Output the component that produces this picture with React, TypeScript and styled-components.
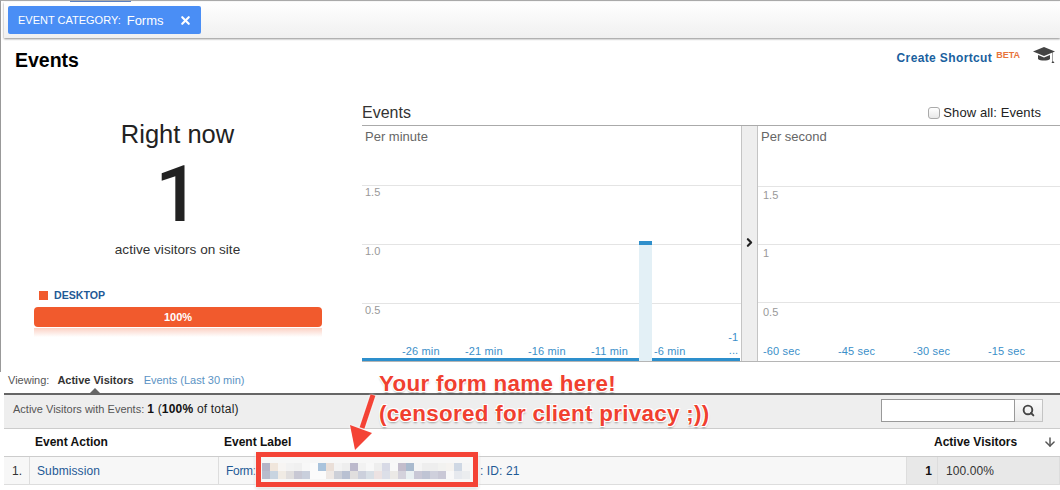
import styled, { createGlobalStyle } from "styled-components";
import { X, Search, ArrowDown, ChevronRight } from "lucide-react";

const GlobalStyle = createGlobalStyle`
  html, body {
    margin: 0;
    padding: 0;
    background: #fff;
    overflow: hidden;
  }
  * {
    box-sizing: border-box;
  }
`;

const Page = styled.div`
  position: relative;
  width: 1060px;
  height: 490px;
  overflow: hidden;
  font-family: "Liberation Sans", Arial, sans-serif;
  color: #222;
`;

const TopSection = styled.div`
  position: relative;
  height: 372px;
  border-left: 1px solid #999;
  border-top: 1px solid #aaa;
`;

const ActiveTabMark = styled.div`
  position: absolute;
  left: 69px;
  top: 0;
  width: 61px;
  height: 1px;
  background: #5b7fc0;
`;

const FilterBar = styled.div`
  margin: 1px 0 0 3px;
  height: 36px;
  padding: 4px 0 0 4px;
  background: linear-gradient(#fff, #f0f0f0);
  box-shadow: 0 1px 2px rgba(0, 0, 0, 0.45);
`;

const Chip = styled.div`
  width: 193px;
  height: 28px;
  padding-left: 10px;
  display: flex;
  align-items: center;
  color: #fff;
  background: #4a8ef5;
  border-radius: 2px;
`;

const ChipKey = styled.span`
  font-size: 11px;
  margin-right: 6px;
`;

const ChipValue = styled.span`
  font-size: 13px;
  width: 52px;
`;

const TitleRow = styled.div`
  height: 60px;
  display: flex;
  justify-content: space-between;
  padding: 0 5px 0 14px;
`;

const Title = styled.h1`
  margin: 11px 0 0;
  font-size: 19.5px;
  line-height: 23px;
  font-weight: bold;
  color: #000;
`;

const ShortcutBox = styled.div`
  display: flex;
  align-items: flex-start;
  padding-top: 9px;
`;

const ShortcutLink = styled.a`
  font-size: 12px;
  line-height: 15px;
  margin-top: 4px;
  font-weight: bold;
  letter-spacing: 0.37px;
  color: #1a5f9e;
`;

const Beta = styled.sup`
  font-size: 9px;
  line-height: 10px;
  margin: 3px 13px 0 4px;
  font-weight: bold;
  color: #e8743b;
`;

const Overview = styled.div`
  display: flex;
`;

const NowPanel = styled.div`
  flex: none;
  width: 361px;
  padding-top: 21px;
`;

const NowHeading = styled.div`
  width: 353px;
  text-align: center;
  font-size: 25.5px;
  line-height: 30px;
  color: #222;
`;

const NowCount = styled.div`
  width: 353px;
  margin-top: 4px;
  text-align: center;
  font-family: Roboto, "Liberation Sans", sans-serif;
  font-size: 78px;
  font-weight: 500;
  line-height: 84px;
  color: #222;
`;

const NowCaption = styled.div`
  width: 353px;
  margin-top: 5px;
  text-align: center;
  font-size: 13.6px;
  line-height: 16px;
  color: #333;
`;

const DeviceLabel = styled.div`
  margin: 31px 0 0 38px;
  display: flex;
  align-items: center;
  gap: 6px;
  font-size: 10.6px;
  line-height: 13px;
  font-weight: bold;
  color: #1f5a96;
`;

const DeviceSwatch = styled.span`
  width: 9px;
  height: 9px;
  background: #f15a2d;
`;

const DeviceBar = styled.div`
  margin: 5px 0 0 33px;
  width: 288px;
  height: 20px;
  border-radius: 4px;
  background: #f15a2d;
  color: #fff;
  font-size: 11px;
  line-height: 20px;
  font-weight: bold;
  text-align: center;
`;

const DeviceReflection = styled.div`
  margin: 1px 0 0 33px;
  width: 288px;
  height: 9px;
  background: linear-gradient(rgba(241, 90, 45, 0.28), rgba(241, 90, 45, 0));
`;

const ChartPanel = styled.div`
  flex: 1;
  min-width: 0;
  margin-top: 2px;
`;

const ChartHead = styled.div`
  height: 26px;
  display: flex;
  justify-content: space-between;
  align-items: center;
  padding-right: 19px;
  border-bottom: 1px solid #aaa;
`;

const ChartTitle = styled.div`
  font-size: 16px;
  color: #333;
`;

const ShowAll = styled.label`
  display: flex;
  align-items: center;
  gap: 3px;
  font-size: 13px;
  letter-spacing: 0.1px;
  color: #222;
`;

const CheckBox = styled.span`
  width: 12px;
  height: 12px;
  border: 1px solid #aaa;
  border-radius: 3px;
  background: linear-gradient(#fff, #e8e8e8);
`;

const Panes = styled.div`
  display: flex;
  height: 236px;
  border-bottom: 1px solid #b5b5b5;
`;

const Pane = styled.div<{ $width: number }>`
  position: relative;
  flex: none;
  width: ${(p) => p.$width}px;
`;

const PaneTitle = styled.div<{ $height: number }>`
  height: ${(p) => p.$height}px;
  padding: 3px 0 0 3px;
  font-size: 13px;
  line-height: 16px;
  color: #666;
`;

const Band = styled.div<{ $height: number; $top: number; $indent: number }>`
  height: ${(p) => p.$height}px;
  padding: ${(p) => p.$top}px 0 0 ${(p) => p.$indent}px;
  border-top: 1px solid #e4e4e4;
  font-size: 11px;
  line-height: 13px;
  color: #999;
`;

const Bar = styled.div`
  position: absolute;
  left: 277px;
  top: 115px;
  width: 13px;
  height: 120px;
  background: #e3f0f6;
  border-top: 4px solid #2f8fcb;
  z-index: 2;
`;

const Axis = styled.div<{ $line: boolean }>`
  position: absolute;
  left: 0;
  right: 1px;
  bottom: 0;
  height: 17px;
  border-bottom: 3px solid ${(p) => (p.$line ? "#2d8fcc" : "transparent")};
  display: flex;
  align-items: center;
`;

const Tick = styled.span<{ $gap: number }>`
  flex: none;
  width: ${(p) => p.$gap}px;
  font-size: 11px;
  line-height: 13px;
  letter-spacing: 0.15px;
  color: #3b8fc9;
  white-space: nowrap;
`;

const AxisSpacer = styled.span<{ $width: number }>`
  flex: none;
  width: ${(p) => p.$width}px;
`;

const Overflow = styled.div`
  position: absolute;
  right: 3px;
  bottom: 4px;
  text-align: right;
  font-size: 11px;
  line-height: 13px;
  color: #3b8fc9;
`;

const Divider = styled.div`
  flex: none;
  width: 17px;
  background: #eee;
  border-left: 1px solid #c4c4c4;
  border-right: 1px solid #c4c4c4;
  display: flex;
  justify-content: center;
  padding-top: 110px;
  color: #222;
`;

const Tabs = styled.div`
  display: flex;
  gap: 8px;
  margin: 2px 0 6px;
  padding-left: 8px;
  font-size: 11px;
  line-height: 13px;
`;

const TabLabel = styled.span`
  color: #555;
`;

const TabActive = styled.span`
  position: relative;
  font-weight: bold;
  color: #333;
  margin-right: 2px;
  &::after {
    content: "";
    position: absolute;
    left: 33px;
    top: 14px;
    border: 5px solid transparent;
    border-top: 0;
    border-bottom-color: #666;
  }
`;

const TabLink = styled.span`
  color: #5b93c4;
`;

const Table = styled.div`
  margin-left: 4px;
  border-top: 2px solid #666;
`;

const Summary = styled.div`
  height: 34px;
  padding: 4px 17px 0 9px;
  display: flex;
  justify-content: space-between;
  background: #eee;
  border-bottom: 1px solid #ccc;
`;

const SummaryText = styled.div`
  padding-top: 3px;
  font-size: 11px;
  line-height: 15px;
  color: #555;
`;

const SummaryValue = styled.span`
  margin-left: 3px;
  font-size: 12px;
  color: #222;
  letter-spacing: 0.2px;
  b {
    color: #111;
  }
`;

const SearchBox = styled.div`
  display: flex;
  height: 23px;
`;

const SearchInput = styled.div`
  width: 134px;
  background: #fff;
  border: 1px solid #999;
`;

const SearchButton = styled.div`
  width: 28px;
  display: flex;
  align-items: center;
  justify-content: center;
  color: #444;
  background: linear-gradient(#fafafa, #eaeaea);
  border: 1px solid #c4c4c4;
  border-left: 0;
`;

const HeadRow = styled.div`
  height: 27px;
  padding-bottom: 2px;
  display: flex;
  align-items: center;
  font-size: 12px;
  font-weight: bold;
  color: #111;
`;

const HeadCell = styled.div<{ $width: number; $indent: number }>`
  flex: none;
  width: ${(p) => p.$width}px;
  padding-left: ${(p) => p.$indent}px;
  white-space: nowrap;
`;

const SortIcon = styled.span`
  display: flex;
  margin-left: 26px;
  color: #555;
`;

const DataRow = styled.div`
  height: 29px;
  display: flex;
  font-size: 12px;
  letter-spacing: 0.1px;
  background: #f7f7f7;
  border-top: 1px solid #ccc;
  border-bottom: 1px solid #ddd;
`;

const RowCell = styled.div<{ $width: number; $pad: number; $shade?: boolean }>`
  flex: none;
  width: ${(p) => p.$width}px;
  padding-left: ${(p) => p.$pad}px;
  display: flex;
  align-items: center;
  background: ${(p) => (p.$shade ? "#e8e8e8" : "transparent")};
  border-right: 1px solid #ddd;
  color: #333;
`;

const RowLink = styled.span`
  color: #1f5a96;
`;

const FormLabel = styled(RowLink)`
  flex: none;
  width: 30px;
  letter-spacing: -0.3px;
`;

const MetricValue = styled.b`
  margin-left: auto;
  padding-right: 5px;
  color: #111;
`;

const PixelGrid = styled.div`
  margin: 0 10px 0 6px;
  display: grid;
  grid-template-columns: repeat(26, 8px);
  grid-auto-rows: 8px;
`;

const Pixel = styled.span<{ $c: string }>`
  background: ${(p) => p.$c};
`;

const RedBox = styled.div`
  position: absolute;
  left: 256px;
  top: 452px;
  width: 222px;
  height: 35px;
  border: 5px solid #f44336;
  box-shadow: 0 0 2px 1px rgba(255, 255, 255, 0.9), 0 1px 3px rgba(0, 0, 0, 0.3);
`;

const Callout = styled.div`
  position: absolute;
  left: 379px;
  top: 369px;
  font-size: 22.4px;
  line-height: 30px;
  font-weight: bold;
  color: #f0402f;
  white-space: nowrap;
  letter-spacing: 0.3px;
  text-shadow: 1px 1px 0 #fff, -1px -1px 0 #fff, 1px -1px 0 #fff, -1px 1px 0 #fff, 0 2px 2px rgba(0, 0, 0, 0.35);
`;

const CalloutArrow = styled.svg`
  position: absolute;
  left: 340px;
  top: 390px;
  filter: drop-shadow(0 0 1px #fff);
`;

const top = ["#b5b5c8", "#f0e6dc", "#f7f5f3", "#f2f2f2", "#f0f0f0", "#f8f8f8", "#fbfbfb", "#a9c3dc", "#eadfd8", "#f3f3f3", "#eeeeee", "#bcb9cc", "#f2f2f2", "#f8f8f8", "#eeeeee", "#d8dae6", "#f8f8f8", "#c3bdcc", "#a9bace", "#f5f5f5", "#eeeeee", "#eeeeee", "#f2f2f0", "#f5f3f0", "#cfd8e4", "#f5f5f5"];
const bottom = ["#b8bccd", "#c8d4e0", "#f0ebe4", "#e0dede", "#c8c8d4", "#c9cfdc", "#fbfbfb", "#fbfbfb", "#eee8e4", "#cdd0d8", "#b9c1d2", "#e0dede", "#ccd0dc", "#d8dfe6", "#ece2e2", "#dcdfe8", "#ebe9e6", "#d4d2dc", "#e9f0f2", "#c9c8d6", "#bfc4d4", "#cfd0dc", "#c9c8d6", "#f8f8f8", "#e6e9ee", "#ebedef"];

const minuteTicks = ["-26 min", "-21 min", "-16 min", "-11 min", "-6 min"];
const secondTicks = ["-60 sec", "-45 sec", "-30 sec", "-15 sec"];

const App = () => {
  return (
    <Page>
      <GlobalStyle />
      <TopSection>
        <ActiveTabMark />
        <FilterBar>
          <Chip>
            <ChipKey>EVENT CATEGORY:</ChipKey>
            <ChipValue>Forms</ChipValue>
            <X size={13} strokeWidth={4} />
          </Chip>
        </FilterBar>
        <TitleRow>
          <Title>Events</Title>
          <ShortcutBox>
            <ShortcutLink>Create Shortcut</ShortcutLink>
            <Beta>BETA</Beta>
            <svg width="22" height="17" viewBox="0 0 22 17">
              <path d="M11 0 L22 4.5 L11 9 L0 4.5 Z" fill="#444" />
              <path d="M5 8 L11 10.5 L17 8 V12 C15 14 7 14 5 12 Z" fill="#444" />
              <path d="M20 5 V14 L21.5 16 H18.5 L19.5 14 V5 Z" fill="#444" />
            </svg>
          </ShortcutBox>
        </TitleRow>
        <Overview>
          <NowPanel>
            <NowHeading>Right now</NowHeading>
            <NowCount>1</NowCount>
            <NowCaption>active visitors on site</NowCaption>
            <DeviceLabel>
              <DeviceSwatch />
              DESKTOP
            </DeviceLabel>
            <DeviceBar>100%</DeviceBar>
            <DeviceReflection />
          </NowPanel>
          <ChartPanel>
            <ChartHead>
              <ChartTitle>Events</ChartTitle>
              <ShowAll>
                <CheckBox />
                Show all: Events
              </ShowAll>
            </ChartHead>
            <Panes>
              <Pane $width={379}>
                <PaneTitle $height={59}>Per minute</PaneTitle>
                <Band $height={59} $top={0} $indent={3}>1.5</Band>
                <Band $height={59} $top={0} $indent={3}>1.0</Band>
                <Band $height={59} $top={0} $indent={3}>0.5</Band>
                <Bar />
                <Axis $line>
                  <AxisSpacer $width={40} />
                  {minuteTicks.map((tick) => (
                    <Tick $gap={63} key={tick}>
                      {tick}
                    </Tick>
                  ))}
                </Axis>
                <Overflow>
                  -1
                  <br />
                  ...
                </Overflow>
              </Pane>
              <Divider>
                <ChevronRight size={13} strokeWidth={4} />
              </Divider>
              <Pane $width={302}>
                <PaneTitle $height={60}>Per second</PaneTitle>
                <Band $height={58} $top={2} $indent={5}>1.5</Band>
                <Band $height={58} $top={2} $indent={5}>1</Band>
                <Band $height={58} $top={3} $indent={5}>0.5</Band>
                <Axis $line={false}>
                  <AxisSpacer $width={5} />
                  {secondTicks.map((tick) => (
                    <Tick $gap={75} key={tick}>
                      {tick}
                    </Tick>
                  ))}
                </Axis>
              </Pane>
            </Panes>
          </ChartPanel>
        </Overview>
      </TopSection>
      <Tabs>
        <TabLabel>Viewing:</TabLabel>
        <TabActive>Active Visitors</TabActive>
        <TabLink>Events (Last 30 min)</TabLink>
      </Tabs>
      <Table>
        <Summary>
          <SummaryText>
            Active Visitors with Events:
            <SummaryValue>
              <b>1</b> (<b>100%</b> of total)
            </SummaryValue>
          </SummaryText>
          <SearchBox>
            <SearchInput />
            <SearchButton>
              <Search size={13} strokeWidth={3.5} />
            </SearchButton>
          </SearchBox>
        </Summary>
        <HeadRow>
          <HeadCell $width={189} $indent={31}>
            Event Action
          </HeadCell>
          <HeadCell $width={741} $indent={31}>
            Event Label
          </HeadCell>
          <HeadCell $width={83} $indent={0}>
            Active Visitors
          </HeadCell>
          <SortIcon>
            <ArrowDown size={14} strokeWidth={2.5} />
          </SortIcon>
        </HeadRow>
        <DataRow>
          <RowCell $width={26} $pad={8}>1.</RowCell>
          <RowCell $width={189} $pad={7}>
            <RowLink>Submission</RowLink>
          </RowCell>
          <RowCell $width={688} $pad={7}>
            <FormLabel>Form:</FormLabel>
            <PixelGrid>
              {top.map((c, i) => (
                <Pixel $c={c} key={`t${i}`} />
              ))}
              {bottom.map((c, i) => (
                <Pixel $c={c} key={`b${i}`} />
              ))}
            </PixelGrid>
            <RowLink>: ID: 21</RowLink>
          </RowCell>
          <RowCell $width={31} $pad={8} $shade>
            <MetricValue>1</MetricValue>
          </RowCell>
          <RowCell $width={122} $pad={8} $shade>
            100.00%
          </RowCell>
        </DataRow>
      </Table>
      <RedBox />
      <CalloutArrow width="40" height="62" viewBox="0 0 40 62">
        <path d="M33 5 L22 38" stroke="#f44336" strokeWidth="5" fill="none" />
        <path d="M10 35 L32 43 L15 60 Z" fill="#f44336" />
      </CalloutArrow>
      <Callout>
        Your form name here!
        <br />
        (censored for client privacy ;))
      </Callout>
    </Page>
  );
};

export default App;
